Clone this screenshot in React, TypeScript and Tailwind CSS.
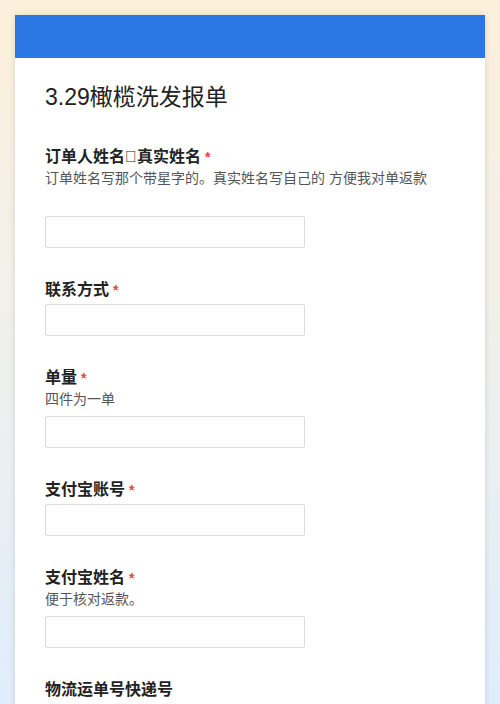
const fields = [
  { label: "订单人姓名\uE000真实姓名", required: true, desc: "订单姓名写那个带星字的。真实姓名写自己的 方便我对单返款", extra: true },
  { label: "联系方式", required: true },
  { label: "单量", required: true, desc: "四件为一单" },
  { label: "支付宝账号", required: true },
  { label: "支付宝姓名", required: true, desc: "便于核对返款。" },
  { label: "物流运单号快递号", required: false },
];

const Field = ({ label, required, desc, extra }: { label: string; required?: boolean; desc?: string; extra?: boolean }) => (
  <div className="mb-[31px]">
    <div className="text-[16px] leading-[22px] font-bold text-[#222]">
      {label}
      {required && <span className="text-[#e8463c] text-[14px] ml-[4px] font-bold">*</span>}
    </div>
    {desc && (
      <div className={`text-[14px] leading-[21px] text-[#555] ${extra ? "pb-[21px]" : ""}`}>{desc}</div>
    )}
    <div className={`${desc ? "mt-[6px]" : "mt-[3px]"} w-[260px] h-[32px] border border-[#dcdcdc] rounded-[2px] bg-white`} />
  </div>
);

export default function App() {
  return (
    <div
      className="h-[704px] overflow-hidden bg-gradient-to-b from-[#fdefdb] via-[#eff0ec] to-[#dfedfc] px-[15px] pt-[15px]"
      style={{ fontFamily: '"Liberation Sans", "Noto Sans CJK SC", sans-serif' }}
    >
      <div className="bg-white shadow-[0_0_6px_rgba(0,0,0,0.12)] min-h-[800px]">
        <div className="h-[43px] bg-[#2a77e3]" />
        <div className="px-[30px]">
          <h1 className="pt-[23px] text-[23px] leading-[32px] text-[#222] font-normal mb-[33px]">3.29橄榄洗发报单</h1>
          {fields.map((f) => (
            <Field key={f.label} {...f} />
          ))}
        </div>
      </div>
    </div>
  );
}
